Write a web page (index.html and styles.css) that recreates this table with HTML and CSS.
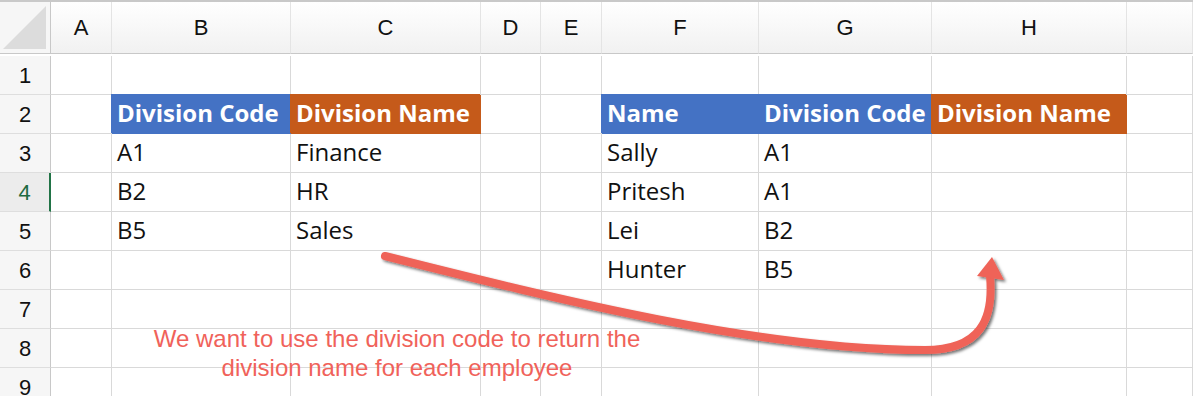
FILE: index.html
```html
<!DOCTYPE html>
<html>
<head>
<meta charset="utf-8">
<link rel="stylesheet" href="styles.css">
</head>
<body>
<div class="sheet">
  <div class="grid">
    <div class="ch corner"><svg class="tri" width="46" height="46" viewBox="0 0 46 46"><polygon points="2,45 45,45 45,2" fill="#dcdcdc"/></svg></div>
    <div class="ch">A</div><div class="ch">B</div><div class="ch">C</div><div class="ch">D</div><div class="ch">E</div><div class="ch">F</div><div class="ch">G</div><div class="ch">H</div><div class="ch"></div>

    <div class="rh">1</div><div class="c"></div><div class="c"></div><div class="c"></div><div class="c"></div><div class="c"></div><div class="c"></div><div class="c"></div><div class="c"></div><div class="c"></div>

    <div class="rh">2</div><div class="c"></div><div class="c blue">Division Code</div><div class="c orange">Division Name</div><div class="c"></div><div class="c"></div><div class="c blue">Name</div><div class="c blue">Division Code</div><div class="c orange">Division Name</div><div class="c"></div>

    <div class="rh">3</div><div class="c"></div><div class="c">A1</div><div class="c">Finance</div><div class="c"></div><div class="c"></div><div class="c">Sally</div><div class="c">A1</div><div class="c"></div><div class="c"></div>

    <div class="rh sel">4</div><div class="c"></div><div class="c">B2</div><div class="c">HR</div><div class="c"></div><div class="c"></div><div class="c">Pritesh</div><div class="c">A1</div><div class="c"></div><div class="c"></div>

    <div class="rh">5</div><div class="c"></div><div class="c">B5</div><div class="c">Sales</div><div class="c"></div><div class="c"></div><div class="c">Lei</div><div class="c">B2</div><div class="c"></div><div class="c"></div>

    <div class="rh">6</div><div class="c"></div><div class="c"></div><div class="c"></div><div class="c"></div><div class="c"></div><div class="c">Hunter</div><div class="c">B5</div><div class="c"></div><div class="c"></div>

    <div class="rh">7</div><div class="c"></div><div class="c"></div><div class="c"></div><div class="c"></div><div class="c"></div><div class="c"></div><div class="c"></div><div class="c"></div><div class="c"></div>

    <div class="rh">8</div><div class="c"></div><div class="c"></div><div class="c"></div><div class="c"></div><div class="c"></div><div class="c"></div><div class="c"></div><div class="c"></div><div class="c"></div>

    <div class="rh">9</div><div class="c"></div><div class="c"></div><div class="c"></div><div class="c"></div><div class="c"></div><div class="c"></div><div class="c"></div><div class="c"></div><div class="c"></div>
  </div>

  <p class="note">We want to use the division code to return the<br>division name for each employee</p>

  <svg class="arrow" width="1193" height="396" viewBox="0 0 1193 396">
    <defs>
      <filter id="sh" x="-10%" y="-10%" width="130%" height="130%">
        <feDropShadow dx="2" dy="2" stdDeviation="1.5" flood-color="#000" flood-opacity="0.55"/>
      </filter>
    </defs>
    <g filter="url(#sh)">
      <path d="M385 256 C 560 300, 760 350, 925 350 C 980 350, 994 320, 990 276" fill="none" stroke="#ef6358" stroke-width="8" stroke-linecap="round"/>
      <polygon points="992,257 977,276 1004,280" fill="#ef6358"/>
    </g>
  </svg>
</div>
</body>
</html>
```
FILE: styles.css
```css
html, body {
  margin: 0;
  padding: 0;
  background: #ffffff;
  overflow: hidden;
}

.sheet {
  position: relative;
  width: 1193px;
  height: 396px;
  overflow: hidden;
}

.grid {
  display: grid;
  grid-template-columns: 51px 61px 179px 190px 60px 61px 157px 173px 195px 66px;
  grid-template-rows: 54px repeat(9, 39px);
  border-top: 2px solid #c9c9c9;
}

.ch {
  box-sizing: border-box;
  background: linear-gradient(#ffffff, #f1f1f1);
  border-right: 1px solid #e4e4e4;
  border-bottom: 1px solid #c8c8c8;
  font-family: "Liberation Sans", Arial, sans-serif;
  font-size: 22px;
  color: #111;
  display: flex;
  align-items: center;
  justify-content: center;
  height: 52px;
}

.corner {
  position: relative;
  border-right: 1px solid #c8c8c8;
  background: #f6f6f6;
  align-items: flex-end;
  justify-content: flex-end;
  padding: 0 3px 3px 0;
}

.rh {
  box-sizing: border-box;
  background: #f6f6f6;
  border-right: 1px solid #c8c8c8;
  border-bottom: 1px solid #dedede;
  font-family: "Liberation Sans", Arial, sans-serif;
  font-size: 22px;
  color: #111;
  display: flex;
  align-items: center;
  justify-content: center;
  padding-top: 2px;
}

.rh.sel {
  background: #ececec;
  color: #1e6b41;
  border-right: 2px solid #217346;
}

.c {
  box-sizing: border-box;
  border-right: 1px solid #d9d9d9;
  border-bottom: 1px solid #d9d9d9;
  font-family: "Open Sans", "Liberation Sans", sans-serif;
  font-size: 24px;
  line-height: 30px;
  color: #111;
  display: flex;
  align-items: center;
  padding: 0 0 3px 5px;
  white-space: nowrap;
}

.blue {
  background: #4472c4;
  border-color: #4472c4;
  box-shadow: -1px -1px 0 0 #4472c4;
  color: #fff;
  font-weight: 700;
}

.orange {
  background: #c55a1a;
  border-color: #c55a1a;
  box-shadow: -1px -1px 0 0 #c55a1a;
  color: #fff;
  font-weight: 700;
}

.note {
  position: absolute;
  left: 127px;
  top: 324px;
  width: 540px;
  margin: 0;
  text-align: center;
  font-family: "Liberation Sans", Arial, sans-serif;
  font-size: 24px;
  line-height: 29px;
  color: #f0625a;
}

.arrow {
  position: absolute;
  left: 0;
  top: 0;
  pointer-events: none;
}
```
